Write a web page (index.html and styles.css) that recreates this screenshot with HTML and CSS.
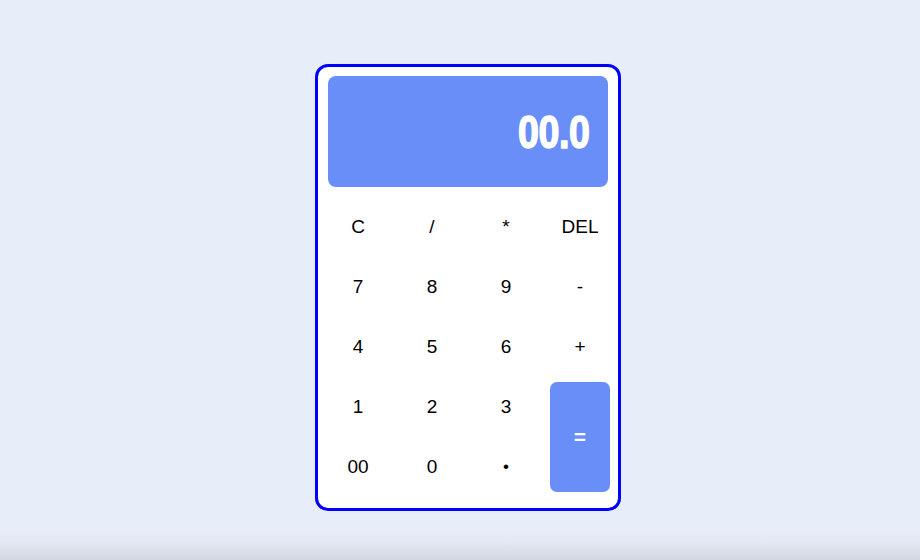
FILE: index.html
```html
<!DOCTYPE html>
<html lang="en">
<head>
<meta charset="utf-8">
<title>Calculator</title>
<link rel="stylesheet" href="styles.css">
</head>
<body>
<main class="page">
  <section class="calc">
    <div class="display"><span class="display-value">00.0</span></div>
    <div class="keys">
      <button class="key">C</button>
      <button class="key">/</button>
      <button class="key">*</button>
      <button class="key">DEL</button>
      <button class="key">7</button>
      <button class="key">8</button>
      <button class="key">9</button>
      <button class="key">-</button>
      <button class="key">4</button>
      <button class="key">5</button>
      <button class="key">6</button>
      <button class="key">+</button>
      <button class="key">1</button>
      <button class="key">2</button>
      <button class="key">3</button>
      <button class="key key-equals">=</button>
      <button class="key">00</button>
      <button class="key">0</button>
      <button class="key key-dot">•</button>
    </div>
  </section>
</main>
</body>
</html>
```

FILE: styles.css
```css
html, body {
  margin: 0;
  padding: 0;
  height: 100%;
  overflow: hidden;
}

body {
  font-family: "Liberation Sans", Arial, sans-serif;
  background: linear-gradient(to bottom, #e7edf9 0, #e7edf9 528px, #e3e8f3 542px, #d2d7e1 560px);
}

.page {
  box-sizing: border-box;
  height: 100vh;
  padding: 14px 0 0 16px;
  display: flex;
  align-items: center;
  justify-content: center;
}

.calc {
  width: 280px;
  padding: 9px 10px 16px 10px;
  background: #ffffff;
  border: 3px solid #0000ff;
  border-radius: 13px;
}

.display {
  height: 111px;
  margin-bottom: 15px;
  background: #6a8ef8;
  border-radius: 8px;
  display: flex;
  align-items: center;
  justify-content: flex-end;
  padding-right: 19px;
}

.display-value {
  display: inline-block;
  color: #ffffff;
  font-family: "Liberation Sans", Arial, sans-serif;
  font-weight: bold;
  font-size: 47px;
  line-height: 1;
  letter-spacing: -0.5px;
  -webkit-text-stroke: 1.5px #ffffff;
  transform: scaleX(0.8);
  transform-origin: right center;
}

.keys {
  width: 282px;
  display: grid;
  grid-template-columns: repeat(4, 60px);
  grid-auto-rows: 50px;
  column-gap: 14px;
  row-gap: 10px;
}

.key {
  border: 0;
  margin: 0;
  padding: 0;
  background: transparent;
  font-family: "Liberation Sans", Arial, sans-serif;
  font-size: 19px;
  color: #000000;
  display: flex;
  align-items: center;
  justify-content: center;
}

.key-equals {
  grid-column: 4;
  grid-row: 4 / span 2;
  background: #6a8ef8;
  color: #ffffff;
  font-weight: bold;
  font-size: 21px;
  border-radius: 7px;
}

.key-dot {
  font-size: 17px;
}
```
